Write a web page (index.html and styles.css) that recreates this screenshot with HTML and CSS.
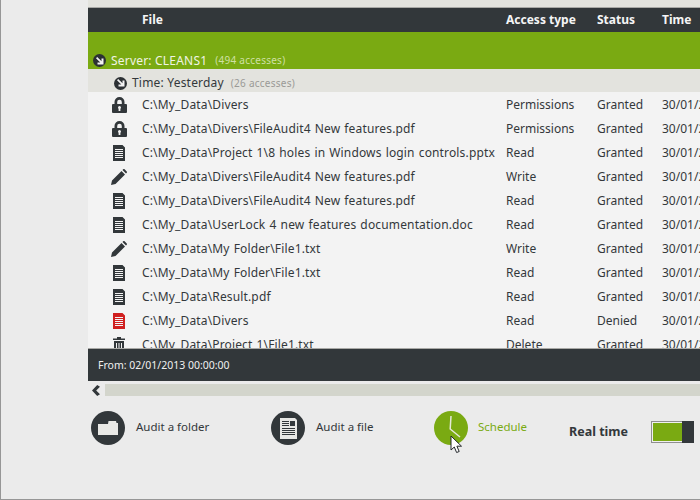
FILE: index.html
```html
<!DOCTYPE html>
<html lang="en">
<head>
    <meta charset="UTF-8">
    <title>File Audit</title>
    <link rel="stylesheet" href="styles.css">
</head>
<body>
    <svg class="defs" width="0" height="0">
        <symbol id="i-lock" viewBox="0 0 15 16">
            <path fill-rule="evenodd" d="M2.500 7V5a5 5 0 0 1 10 0v2h1.500a1 1 0 0 1 1 1v7a1 1 0 0 1-1 1H1a1 1 0 0 1-1-1V8a1 1 0 0 1 1-1zM5.200 7h4.600V5a2.300 2.300 0 0 0-4.600 0zM6 10.500a1.500 1.500 0 0 1 3 0c0 .5-.2.900-.6 1.200V14H6.600v-2.300A1.500 1.500 0 0 1 6 10.500z"/>
        </symbol>
        <symbol id="i-doc" viewBox="0 0 12 16">
            <path fill-rule="evenodd" d="M0 0h9.500L12 2.500V16H0zM2 4v1h8V4zM2 6v1h8V6zM2 8v1h8V8zM2 10v1h8v-1zM2 12v1h8v-1z"/>
        </symbol>
        <symbol id="i-pen" viewBox="0 0 16 16">
            <path d="M0 16l1-4.500L10.500 2l3.500 3.500L4.500 15zM11.500 1l.7-.7a1 1 0 0 1 1.400 0l2.100 2.100a1 1 0 0 1 0 1.400l-.7.7z"/>
        </symbol>
        <symbol id="i-trash" viewBox="0 0 12 16">
            <path fill-rule="evenodd" d="M4 0h4v1.500h4V3H0V1.500h4zM1 4h10v12H1zM3 6v8h1V6zM5.500 6v8h1V6zM8 6v8h1V6z"/>
        </symbol>
        <symbol id="i-arrow" viewBox="0 0 8 8">
            <path d="M0 1.200L1.200 0 5.500 4.300V1.500H7.500V7.500H1.500V5.500h2.800z"/>
        </symbol>
    </svg>

    <div class="app">
        <div class="main">
            <div class="top-strip"></div>
            <div class="cols table-head">
                <span></span>
                <span>File</span>
                <span>Access type</span>
                <span>Status</span>
                <span>Time</span>
            </div>

            <div class="table-body">
                <div class="group-server">
                    <span class="round-arrow"><svg><use href="#i-arrow"/></svg></span>
                    Server: CLEANS1 <small>(494 accesses)</small>
                </div>
                <div class="group-time">
                    <span class="round-arrow"><svg><use href="#i-arrow"/></svg></span>
                    Time: Yesterday <small>(26 accesses)</small>
                </div>

                <div class="cols row">
                    <span class="ico"><svg class="lock"><use href="#i-lock"/></svg></span>
                    <span class="path">C:\My_Data\Divers</span>
                    <span>Permissions</span>
                    <span>Granted</span>
                    <span>30/01/2013</span>
                </div>
                <div class="cols row">
                    <span class="ico"><svg class="lock"><use href="#i-lock"/></svg></span>
                    <span class="path">C:\My_Data\Divers\FileAudit4 New features.pdf</span>
                    <span>Permissions</span>
                    <span>Granted</span>
                    <span>30/01/2013</span>
                </div>
                <div class="cols row">
                    <span class="ico"><svg class="doc"><use href="#i-doc"/></svg></span>
                    <span class="path">C:\My_Data\Project 1\8 holes in Windows login controls.pptx</span>
                    <span>Read</span>
                    <span>Granted</span>
                    <span>30/01/2013</span>
                </div>
                <div class="cols row">
                    <span class="ico"><svg class="pen"><use href="#i-pen"/></svg></span>
                    <span class="path">C:\My_Data\Divers\FileAudit4 New features.pdf</span>
                    <span>Write</span>
                    <span>Granted</span>
                    <span>30/01/2013</span>
                </div>
                <div class="cols row">
                    <span class="ico"><svg class="doc"><use href="#i-doc"/></svg></span>
                    <span class="path">C:\My_Data\Divers\FileAudit4 New features.pdf</span>
                    <span>Read</span>
                    <span>Granted</span>
                    <span>30/01/2013</span>
                </div>
                <div class="cols row">
                    <span class="ico"><svg class="doc"><use href="#i-doc"/></svg></span>
                    <span class="path">C:\My_Data\UserLock 4 new features documentation.doc</span>
                    <span>Read</span>
                    <span>Granted</span>
                    <span>30/01/2013</span>
                </div>
                <div class="cols row">
                    <span class="ico"><svg class="pen"><use href="#i-pen"/></svg></span>
                    <span class="path">C:\My_Data\My Folder\File1.txt</span>
                    <span>Write</span>
                    <span>Granted</span>
                    <span>30/01/2013</span>
                </div>
                <div class="cols row">
                    <span class="ico"><svg class="doc"><use href="#i-doc"/></svg></span>
                    <span class="path">C:\My_Data\My Folder\File1.txt</span>
                    <span>Read</span>
                    <span>Granted</span>
                    <span>30/01/2013</span>
                </div>
                <div class="cols row">
                    <span class="ico"><svg class="doc"><use href="#i-doc"/></svg></span>
                    <span class="path">C:\My_Data\Result.pdf</span>
                    <span>Read</span>
                    <span>Granted</span>
                    <span>30/01/2013</span>
                </div>
                <div class="cols row">
                    <span class="ico denied"><svg class="doc"><use href="#i-doc"/></svg></span>
                    <span class="path">C:\My_Data\Divers</span>
                    <span>Read</span>
                    <span>Denied</span>
                    <span>30/01/2013</span>
                </div>
                <div class="cols row">
                    <span class="ico"><svg class="doc"><use href="#i-trash"/></svg></span>
                    <span class="path">C:\My_Data\Project 1\File1.txt</span>
                    <span>Delete</span>
                    <span>Granted</span>
                    <span>30/01/2013</span>
                </div>
            </div>

            <div class="table-foot">From: 02/01/2013 00:00:00</div>

            <div class="scroller">
                <svg class="scroll-left" viewBox="0 0 8 11"><path d="M5.200 0L8 1.800 4.200 5.500 8 9.200 5.200 11 0 5.500z"/></svg>
                <div class="scroll-track"></div>
            </div>

            <div class="actions">
                <div class="action action-folder">
                    <span class="circle">
                        <svg width="20" height="14" viewBox="0 0 20 14"><path fill="#e8e8e5" d="M0 3h10l.5-3H18l.5 2h1.500V14H0z"/></svg>
                    </span>
                    <span>Audit a folder</span>
                </div>
                <div class="action action-file">
                    <span class="circle">
                        <svg width="17" height="21" viewBox="0 0 17 21"><path fill="#e8e8e5" fill-rule="evenodd" d="M0 0h15l2 2v19H0zM2 3v1h7V3zM2 5v1h7V5zM2 7v1h7V7zM10 3v5h5V3zM2 10v1h13v-1zM2 12v1h13v-1zM2 14v1h13v-1zM2 16v1h13v-1z"/></svg>
                    </span>
                    <span>Audit a file</span>
                </div>
                <div class="action action-schedule">
                    <span class="circle">
                        <svg width="34" height="34" viewBox="0 0 34 34"><path fill="none" stroke="#e4e8d8" stroke-width="1.500" d="M17 5l-.8 13 9.800 8"/></svg>
                    </span>
                    <span>Schedule</span>
                </div>
                <div class="realtime">
                    <b>Real time</b>
                    <div class="toggle"><div class="toggle-on"></div><div class="toggle-thumb"></div></div>
                </div>
            </div>
        </div>

        <svg class="cursor" width="14" height="20" viewBox="0 0 14 20">
            <path fill="#fff" stroke="#23272b" stroke-width="1" stroke-linejoin="round" d="M1 1v14l3.300-3 2.300 5.500 2.600-1-2.300-5.300h4.600z"/>
        </svg>
    </div>
</body>
</html>
```

FILE: styles.css
```css
html, body {
    margin: 0;
    height: 100%;
    overflow: hidden;
}

body {
    font-family: "Noto Sans", "Open Sans", sans-serif;
    font-size: 12px;
    color: #33383b;
    background-color: #ebebeb;
}

.defs {
    position: absolute;
}

.app {
    position: relative;
    box-sizing: border-box;
    height: 500px;
    width: 700px;
    border-left: 1px solid #969696;
    border-bottom: 1px solid #969696;
    padding-left: 87px;
    overflow: hidden;
}

.main {
    width: 700px;
}

.top-strip {
    height: 7px;
    background-color: #e3e3de;
    border-bottom: 1px solid #a9a9a6;
}

/* shared column widths for header and rows */
.cols {
    display: grid;
    grid-template-columns: 54px 364px 91px 65px 126px;
    white-space: nowrap;
}

.table-head {
    height: 24px;
    line-height: 23px;
    background-color: #32373a;
    color: #f5f5f5;
    font-weight: 700;
}

.table-body {
    height: 316px;
    background-color: #f3f3f3;
    overflow: hidden;
}

.group-server {
    box-sizing: border-box;
    height: 37px;
    padding: 20px 0 0 5px;
    line-height: 17px;
    background-color: #7aaa12;
    color: #f0f4e4;
    letter-spacing: 0.2px;
    display: flex;
    align-items: center;
    gap: 5px;
}

.group-server small {
    font-size: 10px;
    color: #cfe0a4;
    margin-left: 3px;
    letter-spacing: 0.25px;
}

.group-time {
    box-sizing: border-box;
    height: 23px;
    padding: 5px 0 0 26px;
    line-height: 18px;
    background-color: #e3e3de;
    letter-spacing: 0.2px;
    display: flex;
    align-items: center;
    gap: 5px;
}

.group-time small {
    font-size: 10px;
    color: #9a9a96;
    margin-left: 2px;
    letter-spacing: 0.25px;
}

.round-arrow {
    width: 13px;
    height: 13px;
    border-radius: 50%;
    background-color: #2c3134;
    display: flex;
    align-items: center;
    justify-content: center;
}

.round-arrow svg {
    width: 8px;
    height: 8px;
    fill: #f3f3f3;
}

.row {
    height: 24px;
    line-height: 25px;
}

.path {
    letter-spacing: 0.15px;
    word-spacing: 0.8px;
}

.ico {
    display: flex;
    align-items: center;
    justify-content: flex-end;
    padding-right: 16px;
    fill: #32373a;
}

.denied {
    fill: #d01f1f;
}

.ico .lock {
    width: 15px;
    height: 16px;
    margin-right: -1px;
}

.ico .doc {
    width: 12px;
    height: 16px;
    margin-right: 1px;
}

.ico .pen {
    width: 16px;
    height: 16px;
    margin-right: -1px;
}

.table-foot {
    box-sizing: border-box;
    height: 33px;
    border-top: 1px solid #a9a9a6;
    padding-left: 10px;
    line-height: 32px;
    background-color: #32373a;
    color: #f0f0f0;
    font-size: 10.500px;
}

.scroller {
    display: flex;
    align-items: center;
    gap: 5px;
    height: 12px;
    margin-top: 3px;
    padding-left: 4px;
}

.scroll-left {
    width: 8px;
    height: 11px;
    fill: #32373a;
}

.scroll-track {
    flex: 1;
    height: 12px;
    background-color: #d3d5cc;
}

.actions {
    display: flex;
    padding: 15px 0 0 3px;
}

.action {
    display: flex;
    align-items: flex-start;
    gap: 11px;
    line-height: 31px;
    font-size: 11.500px;
}

.action-folder {
    width: 180px;
}

.action-file {
    width: 163px;
}

.action-schedule {
    width: 135px;
    gap: 10px;
    color: #7aaa12;
}

.circle {
    width: 34px;
    height: 34px;
    border-radius: 50%;
    background-color: #32373a;
    display: flex;
    align-items: center;
    justify-content: center;
}

.action-schedule .circle {
    background-color: #7aaa12;
}

.realtime {
    display: flex;
    align-items: center;
    gap: 23px;
    height: 22px;
    margin-top: 9px;
    font-size: 12.500px;
}

.toggle {
    display: flex;
    box-sizing: border-box;
    width: 43px;
    height: 22px;
    margin-top: 2px;
}

.toggle-on {
    flex: 1;
    background-color: #7aaa12;
    border: 1px solid #8f8f8f;
    border-right: none;
    box-shadow: inset 1px 1px 0 #f0f0f0, inset 0 -1px 0 #f0f0f0;
}

.toggle-thumb {
    width: 12px;
    background-color: #32373a;
}

/* mouse pointer captured in the screenshot, sits over the schedule button */
.cursor {
    position: absolute;
    left: 449px;
    top: 435px;
}
```
